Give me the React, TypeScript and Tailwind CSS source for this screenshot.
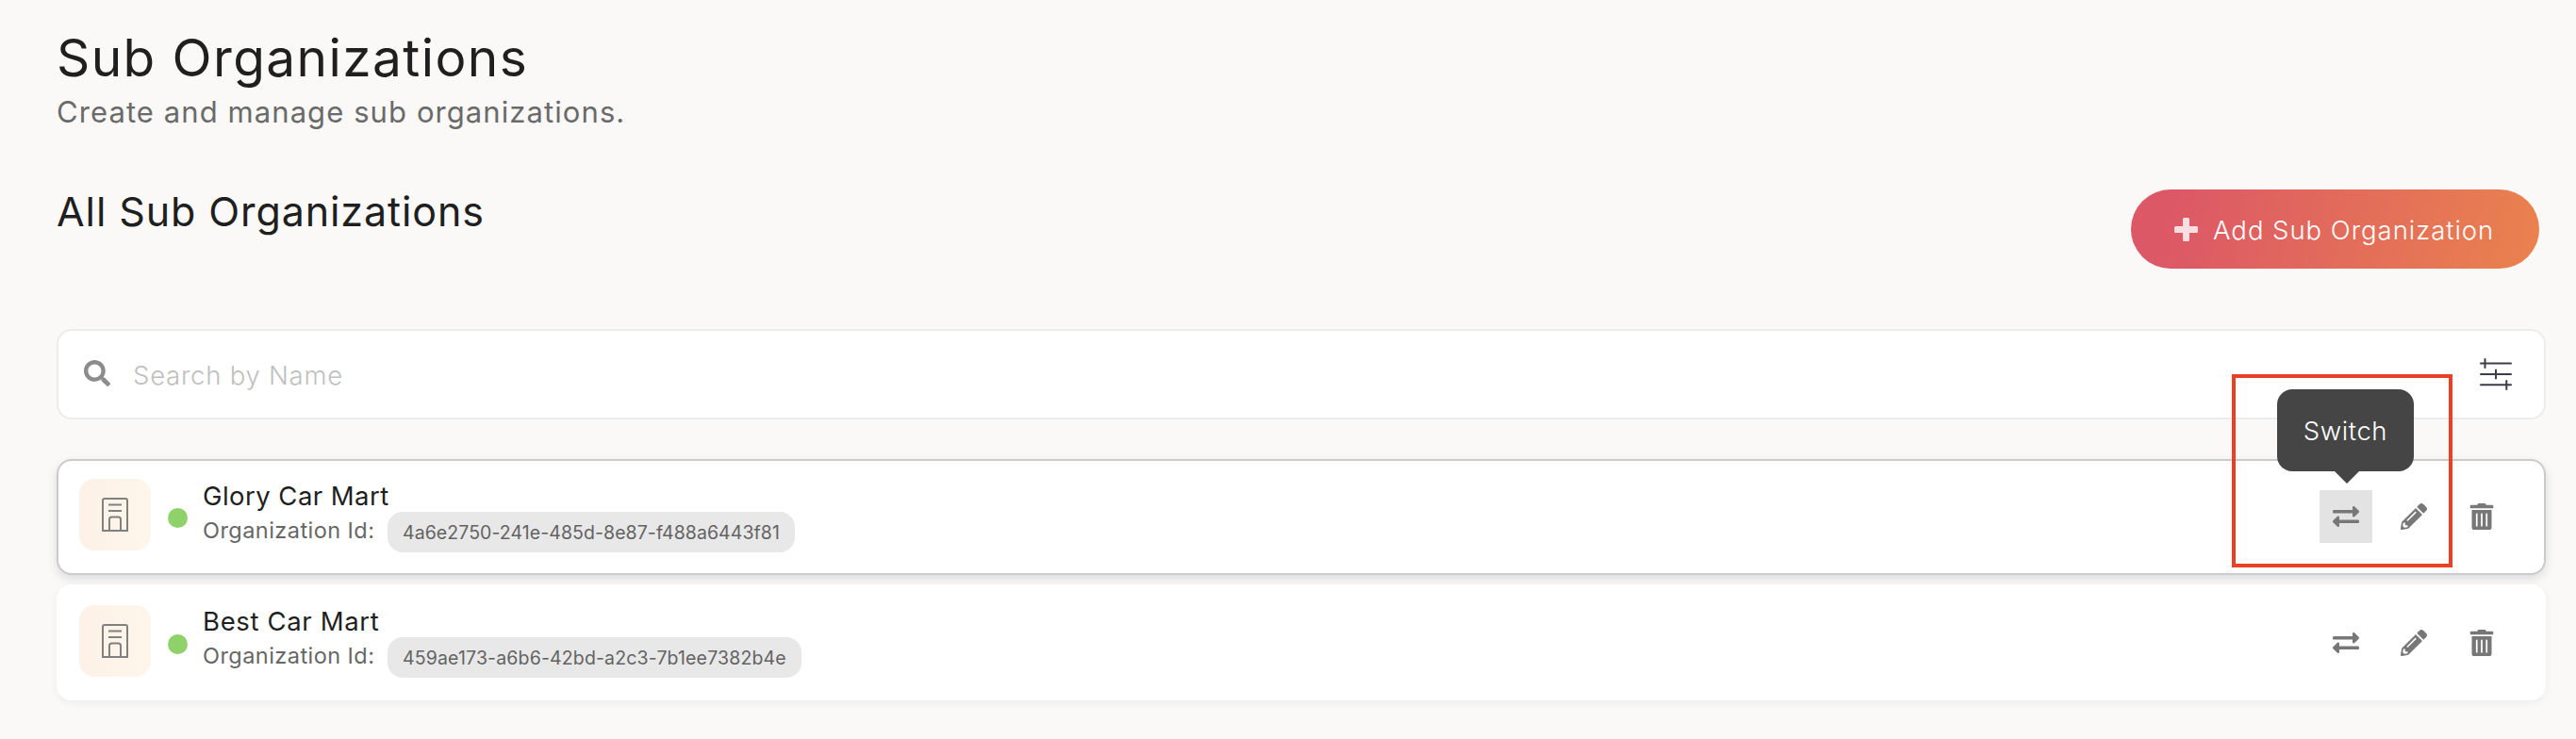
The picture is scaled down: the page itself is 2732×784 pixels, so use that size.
import React from 'react';
import { FaExchangeAlt, FaPencilAlt, FaSearch, FaTrashAlt } from 'react-icons/fa';

type Org = { name: string; id: string; active: boolean; nameTracking: string; idTracking: string };

const orgs: Org[] = [
  { name: 'Glory Car Mart', id: '4a6e2750-241e-485d-8e87-f488a6443f81', active: true, nameTracking: 'tracking-[0.45px]', idTracking: 'tracking-[0.07px]' },
  { name: 'Best Car Mart', id: '459ae173-a6b6-42bd-a2c3-7b1ee7382b4e', active: false, nameTracking: 'tracking-[0.65px]', idTracking: 'tracking-[0.15px]' },
];

function PlusIcon() {
  return (
    <svg className="mr-4 opacity-80" width="25" height="25" viewBox="0 0 25 25" fill="#fff">
      <path d="M10.500 0h4a1.500 1.500 0 0 1 1.500 1.500V9h7.500a1.500 1.500 0 0 1 1.500 1.500v4a1.500 1.500 0 0 1-1.500 1.500H16v7.500a1.500 1.500 0 0 1-1.500 1.500h-4A1.500 1.500 0 0 1 9 23.500V16H1.500A1.500 1.500 0 0 1 0 14.500v-4A1.500 1.500 0 0 1 1.500 9H9V1.500A1.500 1.500 0 0 1 10.500 0z" />
    </svg>
  );
}

function BuildingIcon() {
  return (
    <svg width="28" height="36" viewBox="0 0 28 36" fill="none" stroke="#808080" strokeWidth="2">
      <path d="M1 35V3a2 2 0 0 1 2-2h22a2 2 0 0 1 2 2v32z" />
      <path d="M7 7.500h14M7 14h14" />
      <path d="M8 35V23a2.500 2.500 0 0 1 2.500-2.500h7a2.500 2.500 0 0 1 2.500 2.500v12" />
    </svg>
  );
}

function FilterIcon() {
  return (
    <svg width="34" height="34" viewBox="0 0 34 34" fill="none" stroke="#3d3c4a" strokeWidth="2" strokeLinecap="round">
      <path d="M1 5.500h32M1 17h32M1 28.300h32" />
      <path d="M5.500 1v9M17 12.500v9M28.300 24v9" />
    </svg>
  );
}

function Tooltip() {
  return (
    <>
      <span className="absolute -left-[93px] -top-[123px] h-[205px] w-[234px] border-4 border-[#eb4026]" />
      <span className="absolute -left-[45px] -top-[107px] flex h-[87px] w-[145px] items-center justify-center rounded-2xl bg-[#454545] pt-[2px] text-[27.500px] font-light tracking-[0.6px] text-white">Switch</span>
      <svg className="absolute -top-5 left-4" width="26" height="13" viewBox="0 0 26 13"><path d="M0 0h26L13 13z" fill="#454545" /></svg>
    </>
  );
}

function OrgRow({ org }: { org: Org }) {
  return (
    <div
      className={
        org.active
          ? 'flex h-[123px] rounded-2xl border-2 border-[#cbcbcb] bg-white pl-[22px] pr-[38px] shadow-[0_4px_10px_rgba(60,60,100,0.16)]'
          : 'relative mt-[10px] flex h-[123px] rounded-2xl border-2 border-white bg-white pl-[22px] pr-[38px] shadow-[0_3px_8px_rgba(60,60,100,0.06)]'
      }
    >
      <div className={org.active ? 'mt-[19px] flex size-[76px] items-center justify-center rounded-2xl bg-linear-to-r from-[#fdf1e8] to-[#fef6ea]' : 'mt-5 flex size-[76px] items-center justify-center rounded-2xl bg-linear-to-r from-[#fdf1e8] to-[#fef6ea]'}>
        <BuildingIcon />
      </div>
      <div className={org.active ? 'ml-[18px] mt-[50px] size-[21px] rounded-full bg-[#8fd16a]' : 'ml-[18px] mt-[51px] size-[21px] rounded-full bg-[#8fd16a]'} />
      <div className="ml-[17px] mt-[21px] flex flex-col">
        <div className={`-ml-px h-8 text-[27.500px] leading-8 text-[#1f1f1f] ${org.nameTracking}`}>{org.name}</div>
        <div className="flex">
          <span className="-ml-px mt-[5px] w-[196px] text-[23.500px] leading-8 tracking-[0.45px] text-[#666]">Organization Id:</span>
          <span className={`mt-px h-[43px] rounded-2xl bg-[#e8e8e8] px-4 text-[19.500px] leading-[45px] text-[#636363] ${org.idTracking}`}>{org.id}</span>
        </div>
      </div>
      <div className={org.active ? 'mb-px ml-auto flex items-center gap-4 text-[28px] text-[#777]' : 'ml-auto flex items-center gap-4 text-[28px] text-[#777]'}>
        <span className={org.active ? 'relative flex size-14 items-center justify-center bg-[#e3e3e3]' : 'flex size-14 items-center justify-center'}>
          <FaExchangeAlt />
          {org.active && <Tooltip />}
        </span>
        <span className="flex size-14 items-center justify-center"><FaPencilAlt /></span>
        <span className="flex size-14 items-center justify-center"><FaTrashAlt /></span>
      </div>
    </div>
  );
}

export default function App() {
  return (
    <div className="h-[784px] w-[2732px] overflow-hidden bg-[#faf9f7] pl-[60px] pr-8 font-['Inter',sans-serif]">
      <h1 className="pt-[26px] text-[55px] leading-[70px] tracking-[1.4px] text-[#1f1f1f]">Sub Organizations</h1>
      <p className="text-[31px] leading-[45px] tracking-[1.08px] text-[#6a6a6a]">Create and manage sub organizations.</p>
      <div className="mt-[60px] flex h-[84px] justify-between pr-[7px]">
        <h2 className="text-[43px] leading-[47px] tracking-[0.9px] text-[#1f1f1f]">All Sub Organizations</h2>
        <button className="flex h-[84px] w-[433px] items-center rounded-full bg-linear-[100deg] from-[#dc5866] from-10% to-[#ea824e] pl-[46px] pt-px text-[27.500px] font-light tracking-[0.97px] text-white">
          <PlusIcon />
          <span className="pt-[2px]">Add Sub Organization</span>
        </button>
      </div>
      <div className="mt-16 flex h-24 items-center rounded-2xl border-2 border-[#ececec] bg-white pl-[27px] pr-[34px]">
        <FaSearch className="mb-[3px] text-[28px] text-[#8c8c8c]" />
        <span className="ml-6 pt-[3px] text-[27.500px] font-light tracking-[0.75px] text-[#bfbfbf]">Search by Name</span>
        <span className="ml-auto"><FilterIcon /></span>
      </div>
      <div className="mt-[42px]">
        {orgs.map((org) => <OrgRow key={org.id} org={org} />)}
      </div>
    </div>
  );
}
